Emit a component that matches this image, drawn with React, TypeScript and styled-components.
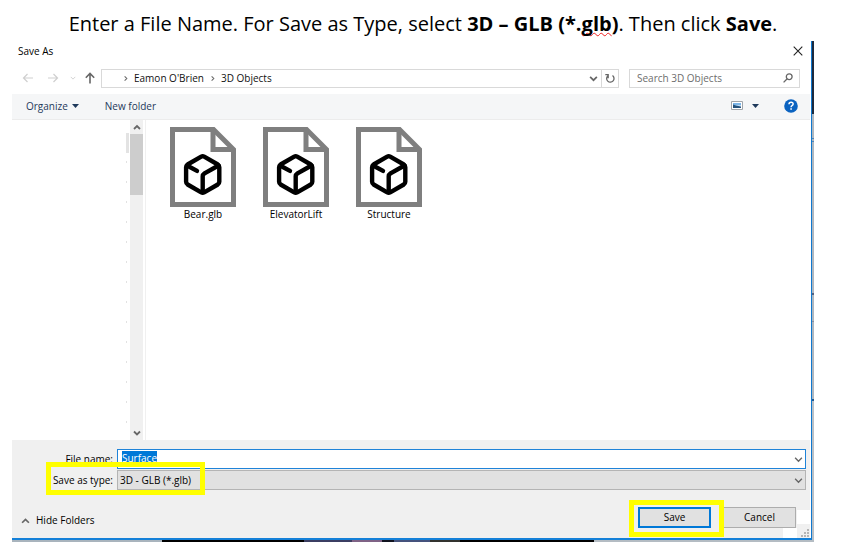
import React, { useEffect, useRef } from "react";
import styled, { createGlobalStyle } from "styled-components";

const GlobalStyle = createGlobalStyle`
  * { box-sizing: border-box; }
  body {
    margin: 0;
    background: #fff;
    color: #000;
    font-family: "Open Sans", "Noto Sans", sans-serif;
    font-size: 10px;
    line-height: 14px;
  }
  button, input, select { font: inherit; color: inherit; border-radius: 0; margin: 0; }
  button { padding: 0; border: 0; background: none; }
  svg { display: block; flex: none; }
`;

const Page = styled.main`
  padding-bottom: 11px;
`;

const Heading = styled.h1`
  margin: 0;
  padding: 8px 0 0 2px;
  height: 41px;
  font-size: 20px;
  line-height: 32px;
  font-weight: 400;
  text-align: center;
  white-space: nowrap;
`;

const Misspelt = styled.span`
  text-decoration: underline wavy #f02020 1px;
  text-decoration-skip-ink: none;
  text-underline-offset: 1px;
`;

const Desktop = styled.div`
  margin: 0 30px 0 12px;
  padding: 0 2px 2px 0;
  background:
    linear-gradient(90deg, #a9b4bd 150px, #000 150px 292px, #3b3e62 292px 340px, #7f6386 340px 370px, #10131f 370px 382px, #45527c 382px 418px, #33332e 418px 448px, #000 448px 582px, #b4bcc3 582px) left bottom / 100% 2px no-repeat,
    linear-gradient(180deg, #1d2b3e 73px, #aeb7bf 73px 97px, #4e86bb 97px 98px, #aeb7bf 98px 100px, #4e86bb 100px 101px, #aeb7bf 101px 252px, #56617f 252px 254px, #aeb7bf 254px 280px, #8790a0 280px 281px, #aeb7bf 281px 358px, #235a91 358px 360px, #b9c0c6 360px);
`;

const Dialog = styled.section`
  background: #fff;
  border-right: 1px solid #0f78d0;
  border-bottom: 2px solid #1480d8;
`;

const TitleBar = styled.header`
  display: flex;
  align-items: center;
  justify-content: space-between;
  height: 20px;
  padding: 0 8px 0 6px;
`;

const IconButton = styled.button`
  display: flex;
  align-items: center;
  justify-content: center;
`;

const AddressRow = styled.div`
  display: flex;
  align-items: center;
  height: 33px;
  padding: 1px 11px 0 10px;
`;

const NavButtons = styled.nav`
  display: flex;
  align-items: center;
  width: 79px;
`;

const NavButton = styled(IconButton)<{ $width: number }>`
  flex: none;
  width: ${(p) => p.$width}px;
  height: 18px;
`;

const PathBox = styled.div`
  flex: 1;
  display: flex;
  align-items: center;
  height: 19px;
  border: 1px solid #d9d9d9;
  padding-left: 20px;
`;

const Crumb = styled.a`
  color: #111;
  text-decoration: none;
  margin: 0 5px;
`;

const Spacer = styled.div`
  flex: 1;
`;

const RefreshButton = styled(IconButton)`
  width: 17px;
  height: 17px;
  margin-left: 3px;
  border-left: 1px solid #d9d9d9;
`;

const SearchBox = styled.label`
  display: flex;
  align-items: center;
  width: 171px;
  height: 19px;
  margin-left: 10px;
  padding: 0 6px 0 7px;
  border: 1px solid #d9d9d9;
`;

const SearchInput = styled.input`
  flex: 1;
  min-width: 0;
  height: 17px;
  padding: 0;
  border: 0;
  outline: 0;
  background: none;
  &::placeholder { color: #6d6d6d; opacity: 1; }
`;

const Toolbar = styled.div`
  display: flex;
  align-items: center;
  height: 26px;
  margin-right: 1px;
  padding: 0 12px 2px 14px;
  background: #f5f6f7;
  border-bottom: 1px solid #ececec;
  color: #1e395b;
`;

const ToolButton = styled(IconButton)<{ $after?: number }>`
  gap: 4px;
  margin-right: ${(p) => p.$after ?? 0}px;
`;

const Browser = styled.div`
  display: flex;
  height: 320px;
`;

const Tree = styled.div`
  width: 118px;
  padding: 13px 1px 0 114px;
`;

const TreeMark = styled.div`
  width: 3px;
  height: 20px;
  background: #e3e3e3;
`;

const TreeTicks = styled.div`
  width: 1px;
  height: 280px;
  background: repeating-linear-gradient(180deg, transparent 0 8px, #e2e2e2 8px 10px, transparent 10px 20px);
`;

const ScrollBar = styled.div`
  display: flex;
  flex-direction: column;
  align-items: center;
  width: 13px;
  background: #f0f0f0;
`;

const ScrollButton = styled(IconButton)`
  width: 13px;
  height: 14px;
`;

const Thumb = styled.div`
  width: 13px;
  height: 61px;
  background: #cdcdcd;
`;

const Files = styled.ul`
  flex: 1;
  display: flex;
  align-items: flex-start;
  gap: 1px;
  margin: 0 0 0 2px;
  padding: 7px 0 0 11px;
  border-left: 1px solid #f0f0f0;
  list-style: none;
`;

const FileItem = styled.li`
  display: flex;
  flex-direction: column;
  align-items: center;
  width: 92px;
`;

const Footer = styled.form`
  display: flex;
  flex-direction: column;
  height: 98px;
  margin-right: 1px;
  padding: 9px 4px 0 0;
  background: #f0f0f0;
`;

const FieldRow = styled.div<{ $gap?: number }>`
  position: relative;
  display: flex;
  align-items: center;
  height: 20px;
  margin-bottom: ${(p) => p.$gap ?? 0}px;
`;

const FieldLabel = styled.label`
  width: 105px;
  padding-right: 4px;
  text-align: right;
  white-space: nowrap;
`;

const FieldBox = styled.div<{ $active?: boolean }>`
  flex: 1;
  display: flex;
  align-items: center;
  height: 20px;
  padding-right: 2px;
  border: 1px solid ${(p) => (p.$active ? "#1f83d8" : "#b4b4b4")};
  background: ${(p) => (p.$active ? "#fff" : "#e1e1e1")};
`;

const NameInput = styled.input`
  flex: 1;
  height: 18px;
  padding: 0 0 2px 4px;
  border: 0;
  outline: 0;
  background: none;
  caret-color: transparent;
  &::selection { background: #0078d7; color: #fff; }
`;

const TypeSelect = styled.select`
  flex: 1;
  height: 18px;
  padding: 0 0 0 2px;
  border: 0;
  outline: 0;
  appearance: none;
  background: none;
`;

const Actions = styled.div`
  display: flex;
  align-items: flex-start;
  padding: 17px 10px 0 9px;
`;

const HideButton = styled(IconButton)`
  gap: 6px;
  margin-top: 6px;
`;

const Callout = styled.span<{ $left: number; $top: number; $width: number; $height: number }>`
  position: absolute;
  z-index: 1;
  left: ${(p) => p.$left}px;
  top: ${(p) => p.$top}px;
  width: ${(p) => p.$width}px;
  height: ${(p) => p.$height}px;
  border: 5px solid #ff0;
  pointer-events: none;
`;

const SaveSlot = styled.div`
  position: relative;
  margin-right: 12px;
`;

const ActionButton = styled.button<{ $primary?: boolean }>`
  display: block;
  width: 73px;
  height: 21px;
  padding-bottom: 1px;
  border: ${(p) => (p.$primary ? "2px solid #0078d7" : "1px solid #adadad")};
  background: #e1e1e1;
`;

const FooterEdge = styled.div`
  position: relative;
`;

const Patch = styled.div<{ $right: number; $bottom: number }>`
  position: absolute;
  right: ${(p) => p.$right}px;
  bottom: ${(p) => p.$bottom}px;
  width: 14px;
  height: ${(p) => (p.$right ? 10 : 14)}px;
  background: #fff;
`;

const Grip = styled.svg`
  position: absolute;
  right: 2px;
  bottom: 1px;
`;

function Chevron({ dir, size = 8, color = "#666", weight = 1.2 }: { dir: "up" | "down" | "right"; size?: number; color?: string; weight?: number }) {
  const d = { up: "M1 6 4 3l3 3", down: "M1 2.500l3 3 3-3", right: "M3 1.500l2.500 2.500L3 6.500" }[dir];
  return (
    <svg width={size} height={size} viewBox="0 0 8 8" fill="none" stroke={color} strokeWidth={weight}>
      <path d={d} />
    </svg>
  );
}

function Arrow({ dir, color }: { dir: "left" | "right" | "up"; color: string }) {
  const d = { left: "M11 6H1.500M5.500 2l-4 4 4 4", right: "M1 6h9.500M6.500 2l4 4-4 4", up: "M6 11.500V1.500M1.800 5.700 6 1.500l4.200 4.200" }[dir];
  return (
    <svg width="12" height="12" viewBox="0 0 12 12" fill="none" stroke={color} strokeWidth={dir === "up" ? 1.6 : 1.2}>
      <path d={d} />
    </svg>
  );
}

function Caret() {
  return (
    <svg width="7" height="4" viewBox="0 0 7 4">
      <path d="M0 0h7L3.500 4z" fill="#1e395b" />
    </svg>
  );
}

function ModelFileIcon() {
  return (
    <svg width="66" height="80" viewBox="0 0 66 80" fill="none">
      <path d="M2.500 2.500h41l20 20v55h-61z" stroke="#7f7f7f" strokeWidth="5" />
      <path d="M43 2v20.500h21" stroke="#7f7f7f" strokeWidth="5" />
      <g stroke="#000" strokeWidth="4.400" strokeLinejoin="round" strokeLinecap="round">
        <path d="M31.200 29.600 17.600 37.500q-1.500 1-1.500 2.700v14.600q0 1.700 1.500 2.700l13.600 7.800q1.500.8 3 0l13.600-7.800q1.500-1 1.500-2.700V40.200q0-1.700-1.500-2.700L34.200 29.600q-1.500-.8-3 0z" />
        <path d="M17 38.500l10 5.400M48.500 38.500 34.500 46.300q-1.800 1.200-1.800 3V65" />
      </g>
    </svg>
  );
}

const files = ["Bear.glb", "ElevatorLift", "Structure"];

export default function App() {
  const nameRef = useRef<HTMLInputElement>(null);

  useEffect(() => {
    nameRef.current?.focus();
    nameRef.current?.select();
  }, []);

  return (
    <>
      <GlobalStyle />
      <Page>
        <Heading>
          Enter a File Name. For Save as Type, select <b>3D – GLB (*.<Misspelt>glb</Misspelt>)</b>. Then click <b>Save</b>.
        </Heading>
        <Desktop>
          <Dialog aria-label="Save As">
            <TitleBar>
              <span>Save As</span>
              <IconButton aria-label="Close">
                <svg width="10" height="10" viewBox="0 0 10 10" stroke="#222" strokeWidth="1.100">
                  <path d="M.7.7l8.600 8.600M9.300.7.7 9.300" />
                </svg>
              </IconButton>
            </TitleBar>

            <AddressRow>
              <NavButtons aria-label="History">
                <NavButton $width={12} aria-label="Back"><Arrow dir="left" color="#cfcfcf" /></NavButton>
                <NavButton $width={38} aria-label="Forward"><Arrow dir="right" color="#cfcfcf" /></NavButton>
                <NavButton $width={2} aria-label="Recent locations"><Chevron dir="down" size={6} color="#cfcfcf" /></NavButton>
                <NavButton $width={32} aria-label="Up"><Arrow dir="up" color="#666" /></NavButton>
              </NavButtons>
              <PathBox>
                <Chevron dir="right" size={7} />
                <Crumb href="#eamon">Eamon O'Brien</Crumb>
                <Chevron dir="right" size={7} />
                <Crumb href="#objects">3D Objects</Crumb>
                <Spacer />
                <IconButton aria-label="Previous locations"><Chevron dir="down" size={9} weight={1.5} /></IconButton>
                <RefreshButton aria-label="Refresh">
                  <svg width="10" height="10" viewBox="0 0 10 10" fill="none" stroke="#666" strokeWidth="1.300">
                    <path d="M7.500 2.500A3.700 3.700 0 1 1 2.900 2.700M3.200 5.300V1.600H.3" />
                  </svg>
                </RefreshButton>
              </PathBox>
              <SearchBox>
                <SearchInput type="search" placeholder="Search 3D Objects" aria-label="Search 3D Objects" />
                <svg width="10" height="10" viewBox="0 0 10 10" fill="none" stroke="#666" strokeWidth="1.300">
                  <circle cx="6.200" cy="3.700" r="2.900" />
                  <path d="M4.200 5.800.6 9.400" />
                </svg>
              </SearchBox>
            </AddressRow>

            <Toolbar>
              <ToolButton $after={26}>Organize <Caret /></ToolButton>
              <ToolButton>New folder</ToolButton>
              <Spacer />
              <ToolButton $after={9} aria-label="View">
                <svg width="12" height="9" viewBox="0 0 12 9">
                  <path d="M.5.5h11v8H.5z" fill="#fff" stroke="#a0a5aa" />
                  <path d="M2 2h8v2.500H2z" fill="#7bb5e8" />
                  <path d="M2 3.500l3 1 5 1V7H2z" fill="#24527c" />
                </svg>
              </ToolButton>
              <ToolButton $after={25} aria-label="More view options"><Caret /></ToolButton>
              <ToolButton aria-label="Help">
                <svg width="14" height="14" viewBox="0 0 14 14">
                  <circle cx="7" cy="7" r="6.800" fill="#0b63c0" />
                  <path d="M5 5.200q0-1.900 2.100-1.900T9.100 5.100q0 1-1.100 1.600-.9.500-.9 1.500" fill="none" stroke="#fff" strokeWidth="1.500" />
                  <path d="M6.300 9.200h1.600v1.500H6.300z" fill="#fff" />
                </svg>
              </ToolButton>
            </Toolbar>

            <Browser>
              <Tree>
                <TreeMark />
                <TreeTicks />
              </Tree>
              <ScrollBar>
                <ScrollButton aria-label="Scroll up"><Chevron dir="up" weight={1.8} /></ScrollButton>
                <Thumb />
                <Spacer />
                <ScrollButton aria-label="Scroll down"><Chevron dir="down" weight={1.8} /></ScrollButton>
              </ScrollBar>
              <Files>
                {files.map((name) => (
                  <FileItem key={name}>
                    <ModelFileIcon />
                    <span>{name}</span>
                  </FileItem>
                ))}
              </Files>
            </Browser>

            <FooterEdge>
              <Footer onSubmit={(e) => e.preventDefault()}>
                <FieldRow $gap={1}>
                  <FieldLabel htmlFor="file-name">File name:</FieldLabel>
                  <FieldBox $active>
                    <NameInput id="file-name" ref={nameRef} defaultValue="Surface" />
                    <Chevron dir="down" size={9} />
                  </FieldBox>
                </FieldRow>
                <FieldRow>
                  <FieldLabel htmlFor="file-type">Save as type:</FieldLabel>
                  <FieldBox>
                    <TypeSelect id="file-type">
                      <option>3D - GLB (*.glb)</option>
                    </TypeSelect>
                    <Chevron dir="down" size={9} />
                  </FieldBox>
                  <Callout $left={34} $top={-8} $width={159} $height={33} />
                </FieldRow>
                <Actions>
                  <HideButton type="button"><Chevron dir="up" size={9} weight={1.5} /> Hide Folders</HideButton>
                  <Spacer />
                  <SaveSlot>
                    <ActionButton $primary>Save</ActionButton>
                    <Callout $left={-9} $top={-7} $width={95} $height={37} />
                  </SaveSlot>
                  <ActionButton type="button">Cancel</ActionButton>
                </Actions>
              </Footer>
              <Patch $right={0} $bottom={14} />
              <Patch $right={14} $bottom={0} />
              <Grip width="8" height="8" viewBox="0 0 8 8" fill="#b5b5b5">
                <path d="M6 0h2v2H6zM3 3h2v2H3zM6 3h2v2H6zM0 6h2v2H0zM3 6h2v2H3zM6 6h2v2H6z" />
              </Grip>
            </FooterEdge>
          </Dialog>
        </Desktop>
      </Page>
    </>
  );
}
